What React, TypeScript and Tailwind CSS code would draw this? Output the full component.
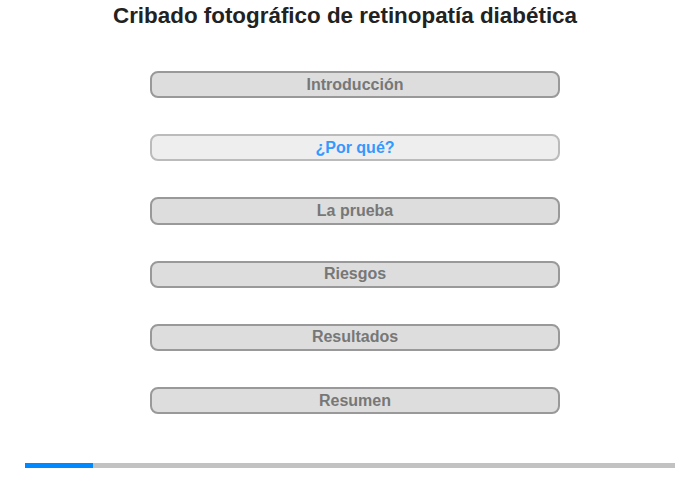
const sections = [
  { label: "Introducción", active: false },
  { label: "¿Por qué?", active: true },
  { label: "La prueba", active: false },
  { label: "Riesgos", active: false },
  { label: "Resultados", active: false },
  { label: "Resumen", active: false },
];

export default function App() {
  return (
    <div className="w-[700px] h-[480px] bg-white font-['Liberation_Sans',Arial,sans-serif] flex flex-col">
      <h1 className="text-center text-[22.4px] leading-[24px] font-bold text-[#222] pt-[4px] pr-[10px]">
        Cribado fotográfico de retinopatía diabética
      </h1>
      <div className="flex flex-col gap-[36px] mt-[43px] ml-[150px] w-[410px]">
        {sections.map((s) => (
          <button
            key={s.label}
            type="button"
            className={
              s.active
                ? "h-[27.2px] rounded-[8px] border-2 border-[#bbbbbb] bg-[#eeeeee] text-[#3399ff] text-[16px] font-bold leading-none"
                : "h-[27.2px] rounded-[8px] border-2 border-[#999999] bg-[#dddddd] text-[#777777] text-[16px] font-bold leading-none"
            }
          >
            {s.label}
          </button>
        ))}
      </div>
      <div className="mt-[49px] mx-[25px] h-[5px] bg-[#c2c2c2] flex">
        <div className="w-[68px] h-full bg-[#0088ff]" />
      </div>
    </div>
  );
}
